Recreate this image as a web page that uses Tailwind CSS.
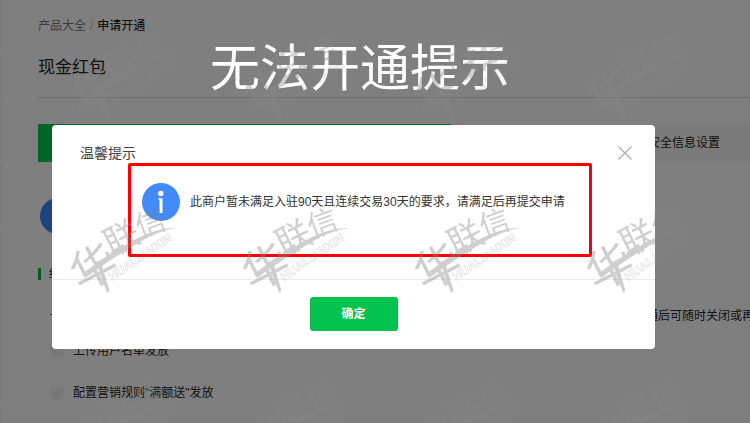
<!DOCTYPE html>
<html lang="zh-CN">
<head>
<meta charset="utf-8">
<meta name="viewport" content="width=device-width, initial-scale=1">
<title>现金红包 - 申请开通</title>
<script src="https://cdn.jsdelivr.net/npm/@tailwindcss/browser@4"></script>
</head>
<body class="relative min-h-screen overflow-hidden bg-white font-['Liberation_Sans','Noto_Sans_CJK_SC',sans-serif] text-xs text-[#222]">

<!-- Page behind the dialog -->
<div class="flex min-h-screen">
  <aside class="flex w-[3px] shrink-0 flex-col bg-[#fafafa] pt-[99px]">
    <div class="h-[68px] border-y border-[#e0e0e0]"></div>
  </aside>
  <main class="min-w-0 flex-1 pl-[35px] pt-4">
    <nav aria-label="面包屑" class="flex gap-1 leading-5">
      <a href="#" class="text-[#777]">产品大全</a>
      <span class="text-[#bbb]">/</span>
      <span class="text-black">申请开通</span>
    </nav>
    <h1 class="mt-5 border-b border-[#d8d8d8] pb-[17px] text-[17px] leading-6">现金红包</h1>
    <ol class="mt-[26px] flex h-[38px] items-center bg-[#f6f6f6]">
      <li class="h-full w-[58%] bg-[#00cc52]"></li>
      <li class="flex-1 whitespace-nowrap pr-[30px] text-right">安全信息设置</li>
    </ol>
    <div class="ml-[2px] mt-9 size-9 rounded-full bg-[#3f85f5]"></div>
    <h2 class="mt-[30px] flex items-center gap-2 leading-5"><span class="h-3 w-[3px] bg-[#00b84a]"></span>红包发放方式</h2>
    <p class="mt-[22px] flex justify-between overflow-hidden whitespace-nowrap pl-3 leading-5">
      <span>一、选择发放方式</span><span class="-mr-1">开通后可随时关闭或再</span>
    </p>
    <div class="mt-[15px] flex flex-col gap-[22px] pl-3 leading-5">
      <label class="flex items-center gap-[9px]"><input type="checkbox" checked disabled class="size-[14px] appearance-none rounded-sm border border-[#f0f0f0] bg-[#f5f5f5]"><svg class="-ml-[23px] size-[14px]" viewBox="0 0 14 14" fill="none" stroke="#d2d2d2" aria-hidden="true"><path d="M3.500 7 6 9.500l5-5"/></svg>上传用户名单发放</label>
      <label class="flex items-center gap-[9px]"><input type="checkbox" checked disabled class="size-[14px] appearance-none rounded-sm border border-[#f0f0f0] bg-[#f5f5f5]"><svg class="-ml-[23px] size-[14px]" viewBox="0 0 14 14" fill="none" stroke="#d2d2d2" aria-hidden="true"><path d="M3.500 7 6 9.500l5-5"/></svg>配置营销规则"满额送"发放</label>
    </div>
  </main>
</div>

<!-- Dialog over a dimmed backdrop -->
<div class="absolute inset-0 bg-black/50 pl-[52px] pr-[95px] pt-[125px]">
  <section role="dialog" aria-modal="true" aria-labelledby="dlg-title" class="rounded bg-white">
    <header class="flex items-center justify-between pl-7 pr-[22px] pt-[18px]">
      <h2 id="dlg-title" class="text-sm leading-5 text-[#444]">温馨提示</h2>
      <button type="button" aria-label="关闭" class="size-4"><svg viewBox="0 0 16 16" fill="none" stroke="#b5b5b5" stroke-width="1.5"><path d="M1.500 1.500l13 13M14.500 1.500l-13 13"/></svg></button>
    </header>
    <div class="mb-[22px] ml-[76px] mr-[63px] flex h-[94px] items-start gap-[10px] rounded-xs border-[3px] border-[#fe0000] pl-[11px] pt-[17px]">
      <svg class="size-[38px] shrink-0" viewBox="0 0 38 38" aria-hidden="true"><circle cx="19" cy="19" r="19" fill="#438af9"/><circle cx="18.800" cy="10.500" r="2.700" fill="#fff"/><path d="M16.500 15.300h4V30h-3V16.800h-1z" fill="#fff"/></svg>
      <p class="whitespace-nowrap leading-[38px] text-[#333]">此商户暂未满足入驻90天且连续交易30天的要求，请满足后再提交申请</p>
    </div>
    <footer class="flex justify-center border-t border-[#ececec] pb-[18px] pt-[17px]">
      <button type="button" class="h-[34px] w-[88px] rounded-[3px] bg-[#04c250] font-bold text-white">确定</button>
    </footer>
  </section>
</div>

<p class="pointer-events-none absolute left-[210px] top-[34px] whitespace-nowrap font-['Noto_Sans_CJK_SC',sans-serif] text-[50px] font-normal leading-[60px] text-white">无法开通提示</p>

<!-- Repeating watermark -->
<svg class="pointer-events-none absolute inset-0 size-full" aria-hidden="true">
  <defs>
    <pattern id="mark" patternUnits="userSpaceOnUse" x="70" y="20" width="172" height="174">
      <g opacity=".4" fill="#868686" font-family="Noto Sans CJK SC, sans-serif">
        <text font-size="46" text-anchor="middle" font-weight="400" transform="translate(31 88) rotate(-27)">华</text>
        <text font-size="35" text-anchor="middle" font-weight="400" transform="translate(57 55) rotate(-27)">联</text>
        <text font-size="30" text-anchor="middle" font-weight="400" transform="translate(84 39) rotate(-20)">信</text>
        <path d="M12 80Q39 59 68 44 90 33 107 34 88 36 70 48 45 62 15 84Z"/>
        <path d="M27 70Q31 85 37 98 39 101 39 95L31 68Z"/>
        <text font-family="Liberation Sans, sans-serif" font-size="12" font-weight="700" fill="none" stroke="#868686" stroke-width=".4" transform="translate(42 87) rotate(-34)">HUALIANXIN</text>
      </g>
    </pattern>
  </defs>
  <rect width="100%" height="100%" fill="url(#mark)"/>
</svg>
</body>
</html>
